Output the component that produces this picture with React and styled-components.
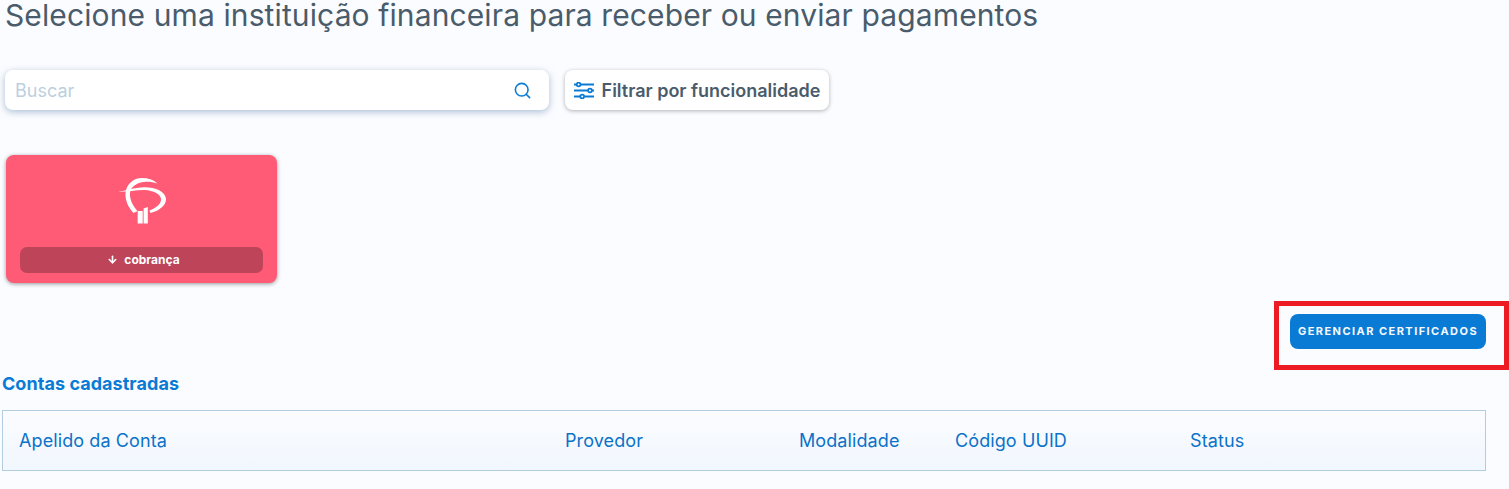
import React from 'react';
import styled, { createGlobalStyle } from 'styled-components';
import { ArrowDown, Search } from 'lucide-react';

const GlobalStyle = createGlobalStyle`
  html, body {
    margin: 0;
    padding: 0;
    height: 100%;
    overflow: hidden;
    background: #fbfcff;
    font-family: 'Inter', 'Liberation Sans', sans-serif;
  }
`;

const Page = styled.div`
  position: relative;
  width: 1509px;
  height: 489px;
  padding: 0 23px 0 2px;
  box-sizing: border-box;
  display: flex;
  flex-direction: column;
  overflow: hidden;
`;

const Title = styled.h1`
  margin: 0 0 0 3px;
  font-size: 30px;
  line-height: 30px;
  font-weight: 400;
  color: #4a5c6b;
  letter-spacing: 0.115px;
  white-space: nowrap;
`;

const Toolbar = styled.div`
  display: flex;
  gap: 16px;
  margin: 40px 0 0 3px;
`;

const SearchBox = styled.div`
  width: 544px;
  height: 40px;
  box-sizing: border-box;
  padding: 1px 17px 0 10px;
  display: flex;
  align-items: center;
  justify-content: space-between;
  background: #fff;
  border-radius: 8px;
  box-shadow: 0 2px 7px rgba(90, 130, 170, 0.5);
  color: #0a7bd4;
`;

const SearchInput = styled.input`
  border: 0;
  outline: 0;
  flex: 1;
  padding: 0;
  background: transparent;
  font: 400 18px 'Inter', sans-serif;
  &::placeholder {
    color: #bccfe0;
    opacity: 1;
  }
`;

const FilterButton = styled.button`
  width: 264px;
  height: 40px;
  padding: 1px 0 0;
  border: 0;
  display: flex;
  align-items: center;
  justify-content: center;
  gap: 8px;
  background: #fff;
  border-radius: 8px;
  box-shadow: 0 1px 4px rgba(0, 0, 0, 0.3);
  font: 600 18px 'Inter', sans-serif;
  color: #4a5c6b;
  white-space: nowrap;
`;

const BankCard = styled.div`
  width: 271px;
  height: 128px;
  margin: 45px 0 0 4px;
  box-sizing: border-box;
  padding: 23px 14px 10px;
  display: flex;
  flex-direction: column;
  align-items: center;
  justify-content: space-between;
  background: #ff5a76;
  border-radius: 8px;
  box-shadow: 0 1px 4px rgba(0, 0, 0, 0.4);
`;

const BankTag = styled.div`
  width: 100%;
  height: 26px;
  box-sizing: border-box;
  padding: 0 0 1px 4px;
  display: flex;
  align-items: center;
  justify-content: center;
  gap: 6px;
  background: #bd4459;
  border-radius: 7px;
  color: #fff;
  font-size: 12px;
  font-weight: 700;
`;

const ActionRow = styled.div`
  display: flex;
  justify-content: flex-end;
  margin-top: 31px;
`;

const PrimaryButton = styled.button`
  width: 196px;
  height: 35px;
  padding: 0 0 1px;
  border: 0;
  background: #0a7bd4;
  border-radius: 8px;
  color: #f4f9ff;
  font: 700 11px 'Inter', sans-serif;
  letter-spacing: 1.45px;
  white-space: nowrap;
`;

const SectionTitle = styled.h2`
  margin: 25px 0 0;
  font-size: 18px;
  line-height: 20px;
  font-weight: 700;
  letter-spacing: 0.05px;
  color: #0a7bd4;
`;

const AccountsTable = styled.div`
  height: 61px;
  margin-top: 16px;
  box-sizing: border-box;
  display: grid;
  grid-template-columns: 546px 234px 156px 235px 1fr;
  align-items: center;
  padding-left: 16px;
  border: 1px solid #b3cde0;
  background: linear-gradient(180deg, #fbfcff 0%, #f1f7fe 100%);
`;

const Column = styled.div`
  font-size: 18px;
  font-weight: 400;
  letter-spacing: 0.1px;
  color: #0a72c9;
`;

const Highlight = styled.div`
  position: absolute;
  left: 1274px;
  top: 301px;
  width: 235px;
  height: 69px;
  box-sizing: border-box;
  border: 5px solid #ed1c24;
  pointer-events: none;
`;

const FilterIcon = () => (
  <svg width="20" height="17" viewBox="0 0 20 17" fill="none" stroke="#0a7bd4" strokeWidth="1.8">
    <path d="M0 2.5 H2.4 M6.8 2.5 H20" />
    <circle cx="4.6" cy="2.5" r="1.9" />
    <path d="M0 8.5 H13.8 M18.2 8.5 H20" />
    <circle cx="16" cy="8.5" r="1.9" />
    <path d="M0 14.5 H6 M10.4 14.5 H20" />
    <circle cx="8.2" cy="14.5" r="1.9" />
  </svg>
);

const BradescoLogo = () => (
  <svg width="48" height="46" viewBox="0 0 48 46" fill="#fff">
    <path d="M15.5 35 C10 29 7 22 7.5 15 C8.5 6 15.5 0 24 0 C30 0 35.5 1.8 39.5 5.4 C34 3.6 29.5 3.4 25.5 4 C18 5 12.5 9.5 12 15 C11.6 21.5 14.5 27.5 19.5 33 Z" />
    <path d="M0 13.8 C8 12.8 16 9.4 26 9.2 C37 9 47.5 13 48 21 C48.2 27.5 41 33 32.5 35 L31.5 32.5 C37.5 30 43 26.5 43 21.5 C43 16 35 12.4 27 12 C18 11.8 9 14 0 13.8 Z" />
    <rect x="19.7" y="33" width="5" height="12.5" />
    <path d="M25.6 30.6 L29.8 29 L29.8 45.5 L25.6 45.5 Z" />
  </svg>
);

const columns = [
  'Apelido da Conta',
  'Provedor',
  'Modalidade',
  'Código UUID',
  'Status',
];

export default function App() {
  return (
    <Page>
      <GlobalStyle />
      <Title>Selecione uma instituição financeira para receber ou enviar pagamentos</Title>

      <Toolbar>
        <SearchBox>
          <SearchInput placeholder="Buscar" />
          <Search size={19} strokeWidth={2} />
        </SearchBox>
        <FilterButton>
          <FilterIcon />
          Filtrar por funcionalidade
        </FilterButton>
      </Toolbar>

      <BankCard>
        <BradescoLogo />
        <BankTag>
          <ArrowDown size={11} strokeWidth={3.5} />
          cobrança
        </BankTag>
      </BankCard>

      <ActionRow>
        <PrimaryButton>GERENCIAR CERTIFICADOS</PrimaryButton>
      </ActionRow>

      <SectionTitle>Contas cadastradas</SectionTitle>

      <AccountsTable>
        {columns.map((col) => (
          <Column key={col}>{col}</Column>
        ))}
      </AccountsTable>

      <Highlight />
    </Page>
  );
}
